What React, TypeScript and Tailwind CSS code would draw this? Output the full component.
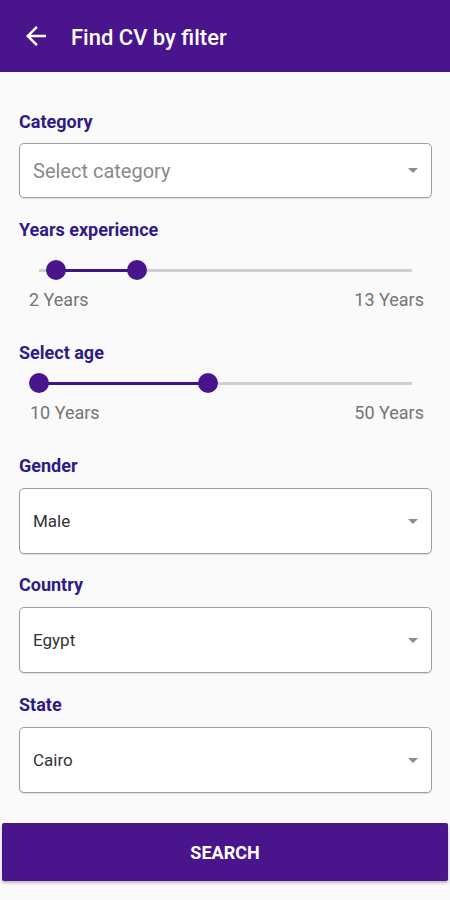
import React from "react";

const Label = ({ children, className = "" }: { children: React.ReactNode; className?: string }) => (
  <div className={`text-[18px] leading-[20px] font-bold text-[#2f1a86] ${className}`}>{children}</div>
);

const Caret = () => (
  <svg width="12" height="7" viewBox="0 0 12 7" className="shrink-0">
    <path d="M1 1 L11 1 L6 6 Z" fill="#8c8c8c" />
  </svg>
);

const SelectBox = ({ text, placeholder = false, h }: { text: string; placeholder?: boolean; h: string }) => (
  <div
    className={`${h} flex items-center justify-between rounded-[5px] border border-[#9e9e9e] bg-white pl-[13px] pr-[12px] shadow-[0_1px_1px_rgba(0,0,0,0.12)]`}
  >
    <span
      className={
        placeholder
          ? "text-[20px] text-[#8a8a8a] leading-[24px]"
          : "text-[17px] text-[#333333] leading-[20px]"
      }
    >
      {text}
    </span>
    <Caret />
  </div>
);

const Slider = ({ a, b }: { a: number; b: number }) => (
  <div className="relative ml-[20px] h-[20px] w-[373px]">
    <div className="absolute left-0 right-0 top-[9px] h-[3px] bg-[#cfcfcf]" />
    <div
      className="absolute top-[9px] h-[3px] bg-[#3b1689]"
      style={{ left: a, width: b - a }}
    />
    <div
      className="absolute top-0 h-[20px] w-[20px] rounded-full bg-[#4a148c]"
      style={{ left: a - 10 }}
    />
    <div
      className="absolute top-0 h-[20px] w-[20px] rounded-full bg-[#4a148c]"
      style={{ left: b - 10 }}
    />
  </div>
);

const RangeLabels = ({ l, r, pl }: { l: string; r: string; pl: string }) => (
  <div className={`flex justify-between ${pl} pr-[8px] text-[18px] leading-[20px] text-[#757575]`}>
    <span>{l}</span>
    <span>{r}</span>
  </div>
);

export default function App() {
  return (
    <div
      className="min-h-[900px] w-[450px] bg-[#fafafa]"
      style={{ fontFamily: "Roboto, 'Noto Sans', sans-serif" }}
    >
      <div className="flex h-[72px] items-center bg-[#4a148c] pl-[26px]">
        <svg width="20" height="20" viewBox="4 4 16 16" className="shrink-0">
          <path d="M20 11H7.83l5.59-5.59L12 4l-8 8 8 8 1.41-1.41L7.83 13H20v-2z" fill="#ffffff" />
        </svg>
        <span className="ml-[25px] mt-[3px] text-[22px] font-medium text-white">Find CV by filter</span>
      </div>

      <div className="pl-[19px] pr-[18px]">
        <Label className="mt-[40px]">Category</Label>
        <div className="mt-[11px]">
          <SelectBox text="Select category" placeholder h="h-[55px]" />
        </div>

        <Label className="mt-[22px]">Years experience</Label>
        <div className="mt-[20px]">
          <Slider a={17} b={98} />
        </div>
        <div className="mt-[10px]">
          <RangeLabels l="2 Years" r="13 Years" pl="pl-[10px]" />
        </div>

        <Label className="mt-[33px]">Select age</Label>
        <div className="mt-[10px]">
          <Slider a={0} b={169} />
        </div>
        <div className="mt-[10px]">
          <RangeLabels l="10 Years" r="50 Years" pl="pl-[11px]" />
        </div>

        <Label className="mt-[33px]">Gender</Label>
        <div className="mt-[12px]">
          <SelectBox text="Male" h="h-[66px]" />
        </div>

        <Label className="mt-[21px]">Country</Label>
        <div className="mt-[12px]">
          <SelectBox text="Egypt" h="h-[66px]" />
        </div>

        <Label className="mt-[22px]">State</Label>
        <div className="mt-[12px]">
          <SelectBox text="Cairo" h="h-[66px]" />
        </div>
      </div>

      <div className="mx-[2px] mt-[30px] flex h-[58px] items-center justify-center rounded-[2px] bg-[#4a148c] shadow-[0_2px_3px_rgba(0,0,0,0.25)]">
        <span className="text-[18px] font-bold text-white">SEARCH</span>
      </div>
    </div>
  );
}
